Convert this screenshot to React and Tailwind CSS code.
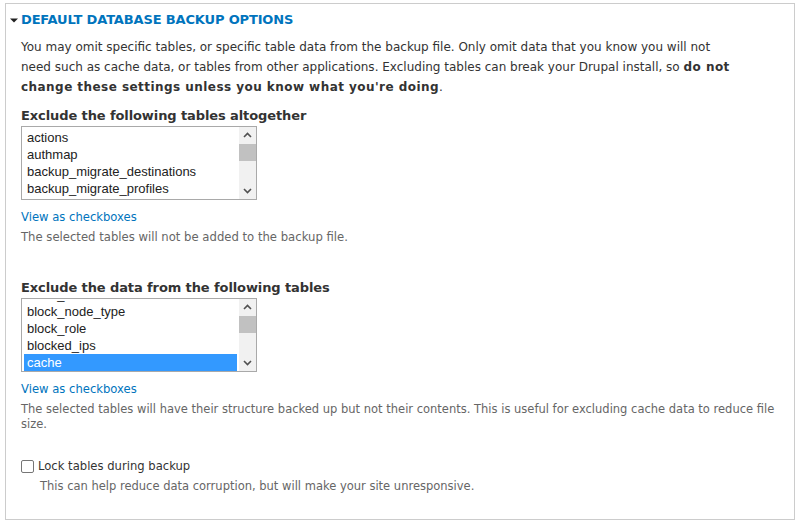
import React from 'react';

const tablesA = ['actions', 'authmap', 'backup_migrate_destinations', 'backup_migrate_profiles'];
const tablesB = ['block_custom', 'block_node_type', 'block_role', 'blocked_ips', 'cache'];

// fake multi-select list with a classic grey scrollbar
const ListBox = ({ items, selected = [], offset = 0 }) => (
  <div className="flex w-[236px] h-[74px] border border-[#a9a9a9] bg-white">
    <div className="flex-1 overflow-hidden p-[2px] pr-[2px]">
      <div style={{ marginTop: -offset }}>
        {items.map((t) => (
          <div
            key={t}
            className={`h-[17px] leading-[17px] pl-[3px] text-[13px] ${
              selected.includes(t) ? 'bg-[#3399ff] text-white' : 'text-[#222]'
            }`}
            style={{ fontFamily: '"Liberation Sans", Arial, sans-serif' }}
          >
            {t}
          </div>
        ))}
      </div>
    </div>
    <div className="w-[17px] bg-[#f1f1f1] flex flex-col items-center">
      <svg width="17" height="17" viewBox="0 0 17 17" className="shrink-0">
        <path d="M5 10 L8.5 6.5 L12 10" fill="none" stroke="#505050" strokeWidth="1.6" />
      </svg>
      <div className="w-[17px] h-[17px] bg-[#c1c1c1] shrink-0" />
      <div className="flex-1" />
      <svg width="17" height="17" viewBox="0 0 17 17" className="shrink-0">
        <path d="M5 7 L8.5 10.5 L12 7" fill="none" stroke="#505050" strokeWidth="1.6" />
      </svg>
    </div>
  </div>
);

const Link = ({ children }) => (
  <a href="#" className="text-[11.6px] text-[#0074bd] no-underline">
    {children}
  </a>
);

export default function App() {
  return (
    <div
      className="w-[800px] h-[524px] bg-white pt-[3px] px-[5px]"
      style={{ fontFamily: '"DejaVu Sans", Verdana, sans-serif' }}
    >
      <fieldset className="h-[517px] border border-[#cccccc] px-[15px] pt-[7px]">
        <div className="flex items-center gap-[3px] -ml-[11px] h-[17px]">
          <svg width="8" height="8" viewBox="0 0 8 8">
            <path d="M0 2.5 L8 2.5 L4 6.5 Z" fill="#222" />
          </svg>
          <span className="text-[13px] font-bold uppercase text-[#0074bd] tracking-[-0.15px]">
            Default database backup options
          </span>
        </div>

        <p className="mt-[9px] max-w-[716px] text-[12px] leading-[20px] text-[#333]">
          You may omit specific tables, or specific table data from the backup file. Only omit data that you know you will not
          need such as cache data, or tables from other applications. Excluding tables can break your Drupal install, so{' '}
          <strong className="tracking-[0.45px]">do not change these settings unless you know what you're doing</strong>.
        </p>

        <div className="mt-[10px]">
          <div className="text-[13px] font-bold text-[#333] leading-[18px] mb-[1px] tracking-[-0.1px]">
            Exclude the following tables altogether
          </div>
          <ListBox items={tablesA} />
          <div className="mt-[7px] leading-[18px]">
            <Link>View as checkboxes</Link>
          </div>
          <div className="text-[11.65px] text-[#666] leading-[15px] mt-[4px]">
            The selected tables will not be added to the backup file.
          </div>
        </div>

        <div className="mt-[34px]">
          <div className="text-[13px] font-bold text-[#333] leading-[18px] mb-[1px] tracking-[-0.1px]">
            Exclude the data from the following tables
          </div>
          <ListBox items={tablesB} selected={['cache']} offset={15} />
          <div className="mt-[7px] leading-[18px]">
            <Link>View as checkboxes</Link>
          </div>
          <div className="text-[11.5px] text-[#666] leading-[15px] mt-[4px]">
            The selected tables will have their structure backed up but not their contents. This is useful for excluding cache data to reduce file
            size.
          </div>
        </div>

        <div className="mt-[26px]">
          <label className="flex items-center gap-[4px] text-[11.6px] text-[#333]">
            <span className="w-[13px] h-[13px] border border-[#767676] rounded-[2px] bg-white inline-block" />
            Lock tables during backup
          </label>
          <div className="ml-[19px] mt-[4px] text-[11.5px] text-[#666] leading-[15px]">
            This can help reduce data corruption, but will make your site unresponsive.
          </div>
        </div>
      </fieldset>
    </div>
  );
}
